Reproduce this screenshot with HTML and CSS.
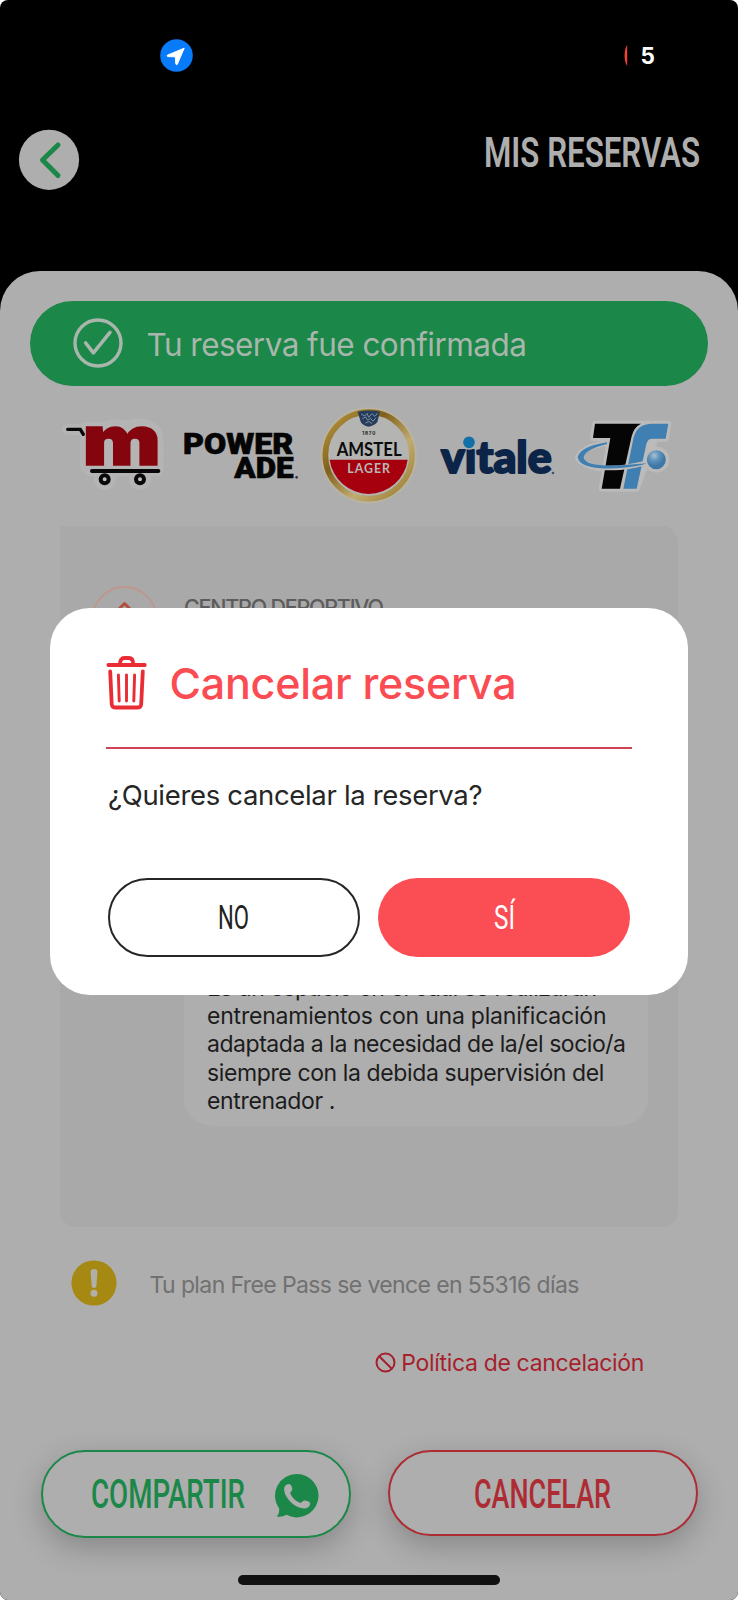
FILE: index.html
```
<!DOCTYPE html>
<html lang="es">
<head>
<meta charset="utf-8">
<title>Mis reservas</title>
<link rel="stylesheet" href="styles.css">
</head>
<body>
<div class="phone">
  <header class="status">
    <svg class="location" viewBox="0 0 33 33"><circle cx="16.5" cy="16.5" r="16.3" fill="#087bfb"/><path d="M24.2 9.2 7.3 16.2Q6.6 17.2 7.8 17.6L15.3 17.8 15.8 25Q16.4 26.4 17.3 25.3Z" fill="#fff" stroke="#fff" stroke-width="1" stroke-linejoin="round"/></svg>
    <div class="battery"><svg class="sliver" viewBox="0 0 4 21"><path d="M3.2 0C-.3 4-.3 17 3.2 21Z" fill="#ef4335"/></svg><span>5</span></div>
  </header>
  <div class="topbar">
    <svg class="back" viewBox="0 0 61 61"><circle cx="30" cy="30.8" r="30.1" fill="#aeaeae"/><path d="M39 16 23.5 31 39 46.5" fill="none" stroke="#1b8748" stroke-width="5" stroke-linecap="round" stroke-linejoin="round"/></svg>
    <svg class="heading" viewBox="0 0 218 50"><text class="cond" x="0" y="38.3" font-size="43" font-weight="600" fill="#aeaeae" textLength="216" lengthAdjust="spacingAndGlyphs">MIS RESERVAS</text></svg>
  </div>
  <main class="sheet">
    <div class="confirmed">
      <svg class="tick" viewBox="0 0 50 50"><circle cx="25" cy="25" r="23" fill="none" stroke="#a8b6ac" stroke-width="3.4"/><path d="M12.7 25 20.4 34.8 37 14.4" fill="none" stroke="#a8b6ac" stroke-width="3.6" stroke-linecap="round" stroke-linejoin="round"/></svg>
      <span class="confirmed-text">Tu reserva fue confirmada</span>
    </div>
    <div class="sponsors">
      <svg class="s1" viewBox="24 0 330 360">
        <g fill="#b4b4b4" stroke="#b4b4b4" stroke-width="34" stroke-linejoin="round" stroke-linecap="round"><path d="M53 103H92L107 119V97H165Q195 83 230 95 262 80 300 96 323 105 323 140V227H120L107 213V135"/><circle cx="164" cy="253" r="16"/><circle cx="270" cy="253" r="16"/></g>
        <path d="M53 103H91L100 118" fill="none" stroke="#080808" stroke-width="10" stroke-linecap="round"/>
        <text class="cart-m" x="98" y="211" font-size="207" textLength="234" lengthAdjust="spacingAndGlyphs">m</text>
        <path d="M126 228H325" stroke="#080808" stroke-width="12" stroke-linecap="round"/>
        <g fill="#c0c0c0" stroke="#080808" stroke-width="12"><circle cx="164" cy="253" r="12"/><circle cx="270" cy="253" r="12"/></g>
      </svg>
      <svg class="s2" viewBox="384 0 370 360">
        <g class="power"><text x="399" y="177" font-size="87" textLength="331" lengthAdjust="spacingAndGlyphs">POWER</text><text x="553" y="249" font-size="87" textLength="178" lengthAdjust="spacingAndGlyphs">ADE</text></g><circle cx="740" cy="247" r="4" fill="#333"/>
      </svg>
      <svg class="s3" viewBox="810 0 300 360">
        <defs><linearGradient id="gold" x1="0" x2="1" y1="0" y2="1"><stop stop-color="#bd9d45"/><stop offset=".35" stop-color="#806019"/><stop offset=".65" stop-color="#c0ab70"/><stop offset="1" stop-color="#98792c"/></linearGradient></defs>
        <circle cx="956" cy="181" r="144" fill="#bbb4a1"/>
        <circle cx="956" cy="181" r="130" fill="#b4b4b2" stroke="url(#gold)" stroke-width="17"/>
        <path d="M839 194H1073A118 118 0 0 1 839 194Z" fill="#a6000f"/>
        <path d="M923 50Q956 43 990 50L982 81Q973 92 956 95 937 91 932 80Z" fill="#273c58"/><path d="M933 57 944 63 951 55 956 67 966 56 975 64 983 54M937 71 947 66 953 76 962 70 969 79 978 68M946 84 958 80 966 86" fill="none" stroke="#7890a8" stroke-width="3"/>
        <text class="tiny" x="937" y="119" font-size="14" textLength="39" fill="#171717">1870</text>
        <text class="amstel" x="860" y="182" font-size="57" textLength="195" lengthAdjust="spacingAndGlyphs">AMSTEL</text>
        <text class="lager" x="892" y="233" font-size="37" textLength="128" lengthAdjust="spacing">LAGER</text>
      </svg>
      <svg class="s4" viewBox="200 0 370 360">
        <text class="vitale" x="212" y="235" font-size="133" textLength="332" lengthAdjust="spacingAndGlyphs">vitale</text><circle cx="297" cy="141" r="23" fill="#aeaeae"/><circle cx="296" cy="142" r="17.5" fill="#1270a8"/><circle cx="548" cy="234" r="4" fill="#425468"/>
      </svg>
      <svg class="s5" viewBox="610 0 310 360">
        <defs><radialGradient id="ball" cx=".4" cy=".3"><stop stop-color="#a9c0d2"/><stop offset=".5" stop-color="#6093bb"/><stop offset="1" stop-color="#3f78a7"/></radialGradient></defs>
        <g fill="#bbb" stroke="#bbb" stroke-width="18" stroke-linejoin="round"><path d="M676 86H896L888 131H858L801 281H696L722 129H670Z"/><circle cx="860" cy="194" r="30"/><path d="M712 145Q635 155 625 190 650 225 750 223L840 204" fill="none"/></g>
        <path d="M676 86H814Q793 96 786 124L751 281H696L722 129H670Z" fill="#050505"/>
        <path d="M896 86 888 131H848Q833 131 830 148L801 281H761L791 131Q801 86 848 86Z" fill="#407fb1"/>
        <path d="M712 145Q636 158 626 187 637 225 752 218 800 213 833 202" fill="none" stroke="#bbb" stroke-width="14"/><path d="M712 142Q632 155 624 186 630 227 752 219 800 216 833 205 795 208 752 211 650 216 642 189 642 165 712 147Z" fill="#407fb1"/>
        <circle cx="860" cy="194" r="31" fill="url(#ball)" stroke="#bbb" stroke-width="5"/>
      </svg>
    </div>
    <section class="details">
      <div class="venue">
        <svg class="pin" viewBox="0 0 66 66"><circle cx="32.5" cy="33" r="32" fill="none" stroke="#be968c" stroke-width="1.8"/><path d="M22 28 32.5 17.5 43 28" fill="none" stroke="#b2503f" stroke-width="3" stroke-linejoin="round"/></svg>
        <span class="venue-name">CENTRO DEPORTIVO</span>
      </div>
      <div class="note"><p class="l0">Es un espacio en el cual se realizarán</p><p class="l1">entrenamientos con una planificación</p><p class="l2">adaptada a la necesidad de la/el socio/a</p><p class="l3">siempre con la debida supervisión del</p><p class="l4">entrenador .</p></div>
    </section>
    <div class="plan">
      <svg class="warn" viewBox="0 0 46 46"><circle cx="23" cy="23" r="22.6" fill="#a68912"/><path d="M19.6 12Q19.6 9 23 9T26.4 12L25.4 26Q25.2 28 23 28T20.6 26Z" fill="#b0afa8"/><circle cx="23" cy="33.2" r="3.5" fill="#b0afa8"/></svg>
      <span class="plan-text">Tu plan Free Pass se vence en 55316 días</span>
    </div>
    <div class="policy">
      <svg class="ban" viewBox="0 0 21 21"><circle cx="10.5" cy="10.5" r="9" fill="none" stroke="#a61f2c" stroke-width="2"/><path d="M4.2 4.2 16.8 16.8" stroke="#a61f2c" stroke-width="2"/></svg>
      <span class="policy-text">Política de cancelación</span>
    </div>
    <div class="actions">
      <div class="action share">
        <svg class="share-label" viewBox="0 0 153 42"><text class="cond" x="0" y="35" font-size="40" font-weight="500" fill="#1b8748" textLength="154" lengthAdjust="spacingAndGlyphs">COMPARTIR</text></svg>
        <svg class="wa" viewBox="0 0 44 44"><path d="M22 0A21.7 21.7 0 1 1 11.5 40.8Q6 43.8 1.8 42.3 4.5 40 4.2 34.5A21.7 21.7 0 0 1 22 0Z" fill="#1b8748"/><path d="M12.5 10.3Q15.8 9 16.8 12.7 18 16.5 15.7 17.9 14.6 18.8 16 21 19.6 26.9 24.8 28.7 26.2 29.2 27.7 27.2 29 25.8 33 27.2 36.2 28.5 34.7 31.4 32.8 35 27.6 34.3 20.3 33.3 14.2 26.5 8.1 19 9.2 13.8 10 11.1 12.5 10.3Z" fill="#aeaeae"/></svg>
      </div>
      <div class="action cancel">
        <svg class="cancel-label" viewBox="0 0 137 42"><text class="cond" x="-1" y="35" font-size="40" font-weight="500" fill="#ad2c34" textLength="137" lengthAdjust="spacingAndGlyphs">CANCELAR</text></svg>
      </div>
    </div>
    <div class="home"></div>
  </main>
  <div class="modal">
    <div class="modal-head">
      <svg class="trash" viewBox="0 0 41 54"><g fill="none" stroke="#ea2c35" stroke-linecap="round" stroke-linejoin="round"><path stroke-width="3.8" d="M2.4 9H38.8M14 8Q14 2 18.4 2H22.8Q27.2 2 27.2 8M4.2 15.5 5.7 48Q5.9 51.5 9 51.5H32Q35 51.5 35.2 48L36.8 15.5"/><path stroke-width="2.9" d="M12.4 19 13.2 45M20.5 19V45M28.6 19 27.8 45"/></g></svg>
      <span class="modal-title">Cancelar reserva</span>
    </div>
    <p class="question">¿Quieres cancelar la reserva?</p>
    <div class="choices">
      <div class="choice no"><svg class="no-label" viewBox="0 0 30 36"><text class="cond" x="-1" y="31" font-size="33" font-weight="400" fill="#222" textLength="31" lengthAdjust="spacingAndGlyphs">NO</text></svg></div>
      <div class="choice yes"><svg class="yes-label" viewBox="0 0 21 36"><text class="cond" x="0" y="31" font-size="33" font-weight="400" fill="#fff" textLength="21" lengthAdjust="spacingAndGlyphs">SÍ</text></svg></div>
    </div>
  </div>
</div>
</body>
</html>
```
FILE: styles.css
```
* { box-sizing: border-box; }
body { margin: 0; background: #fff; font-family: Inter, "Liberation Sans", sans-serif; }
p { margin: 0; }
svg { display: block; flex: none; overflow: visible; }
span, p { white-space: nowrap; }
.cond { font-family: Roboto, "Liberation Sans", sans-serif; }
.phone { position: relative; width: 738px; height: 1600px; background: #000; border-radius: 8px; overflow: hidden; display: flex; flex-direction: column; }

.status { height: 129px; padding: 39px 83px 0 160px; display: flex; justify-content: space-between; align-items: flex-start; }
.location { width: 33px; height: 33px; }
.battery { display: flex; align-items: center; gap: 13px; height: 33px; color: #fff; font-size: 22.5px; font-weight: 700; }
.sliver { width: 4px; height: 21px; }
.topbar { height: 142px; padding: 0 36px 0 19px; display: flex; justify-content: space-between; align-items: flex-start; }
.back { width: 61px; height: 61px; }
.heading { width: 218px; height: 50px; margin-left: auto; margin-right: 0; }

.sheet { flex: 1; background: #aeaeae; border-radius: 40px 40px 0 0; padding-top: 30px; display: flex; flex-direction: column; }
.confirmed { margin: 0 30px; height: 85px; border-radius: 43px; background: #1b8748; display: flex; align-items: center; padding-left: 43px; gap: 23.5px; color: #a8b6ac; }
.tick { width: 50px; height: 50px; margin-top: -1px; }
.confirmed-text { font-size: 31.5px; letter-spacing: -.55px; padding-top: 1px; }

.sponsors { height: 120px; margin: 9px 0 0 58px; display: flex; }
.sponsors svg { height: 120px; }
.s1 { width: 110px; }
.s2 { width: 123.33px; margin-left: 10px; }
.s3 { width: 100px; margin-left: 18.67px; }
.s4 { width: 123.33px; margin-left: 16.67px; }
.s5 { width: 103.33px; margin-left: 13.33px; }
.cart-m { font-family: Inter, sans-serif; font-weight: 900; fill: #84050d; stroke: #84050d; stroke-width: 5; }
.power { font-family: Roboto, sans-serif; font-weight: 900; fill: #050505; stroke: #050505; stroke-width: 2; }
.vitale { font-family: Lato, sans-serif; font-weight: 900; fill: #0b2448; stroke: #0b2448; stroke-width: 6; stroke-linejoin: round; }
.tiny { font-family: Inter, sans-serif; font-weight: 700; }
.amstel { font-family: Lato, sans-serif; font-weight: 700; fill: #0b0b0b; }
.lager { font-family: Lato, sans-serif; font-weight: 700; fill: #b8b8b8; }

.details { margin: 11px 60px 0; height: 701px; border-radius: 0 16px 16px 16px; background: #a9a9a9; display: flex; flex-direction: column; justify-content: space-between; padding: 60px 30px 101px 31.5px; }
.venue { display: flex; gap: 26.5px; align-items: flex-start; }
.pin { width: 66px; height: 66px; }
.venue-name { font-size: 21.5px; line-height: 26px; padding-top: 8px; color: #5c5c5c; letter-spacing: -1.25px; font-weight: 500; }
.note { margin-left: 92.5px; width: 464px; height: 200px; background: #aeaeae; border-radius: 28px; padding: 48px 0 0 23px; font-size: 23px; line-height: 28.2px; color: #1c1c1c; }
.l0, .l2 { letter-spacing: -.46px; }
.l1 { letter-spacing: -.21px; }
.l3 { letter-spacing: -.39px; }
.l4 { letter-spacing: -.35px; }

.plan { height: 46px; margin: 33px 0 0 71px; display: flex; align-items: center; gap: 32.5px; color: #717171; font-size: 23px; }
.plan-text { letter-spacing: -.61px; padding-top: 3px; }
.warn { width: 46px; height: 46px; }
.policy { height: 30px; margin: 41px 94px 0 0; display: flex; justify-content: flex-end; align-items: center; gap: 5px; color: #a61f2c; font-size: 23px; }
.policy-text { letter-spacing: -.33px; padding-top: 2px; }
.ban { width: 21px; height: 21px; }

.actions { margin: 73px 40px 0 41px; display: flex; justify-content: space-between; align-items: flex-start; }
.action { width: 310px; border: 2px solid; border-radius: 44px; background: #aeaeae; box-shadow: 0 10px 30px rgba(0,0,0,.22); display: flex; align-items: center; }
.share { height: 88px; border-color: #1b8748; padding-left: 48px; gap: 31px; }
.share-label { width: 153px; height: 42px; margin-top: -1px; }
.wa { width: 44px; height: 44px; margin-top: 3px; }
.cancel { height: 86px; border-color: #ad2c34; justify-content: center; }
.cancel-label { width: 137px; height: 42px; margin-top: 1px; }
.home { width: 262px; height: 10px; border-radius: 5px; background: #111; margin: 37px auto 0; }

.modal { position: absolute; left: 50px; top: 608px; width: 638px; height: 387px; border-radius: 40px; background: #fff; padding: 48px 56px 0; display: flex; flex-direction: column; }
.modal-head { height: 93px; border-bottom: 2px solid #cf4452; display: flex; align-items: flex-start; gap: 22.5px; }
.trash { width: 41px; height: 54px; }
.modal-title { font-size: 43px; line-height: 55px; font-weight: 550; color: #fb4c53; letter-spacing: -.25px; }
.question { margin: 29px 0 0 2px; font-size: 27.5px; line-height: 34px; color: #262626; letter-spacing: -.33px; }
.choices { margin: 66px 2px 0; display: flex; justify-content: space-between; }
.choice { width: 252px; height: 79px; border-radius: 40px; display: flex; align-items: center; justify-content: center; }
.no { border: 2px solid #262626; }
.yes { background: #fb4d54; }
.no-label { width: 30px; height: 36px; margin-top: -4px; }
.yes-label { width: 21px; height: 36px; margin-top: -4px; }
```
